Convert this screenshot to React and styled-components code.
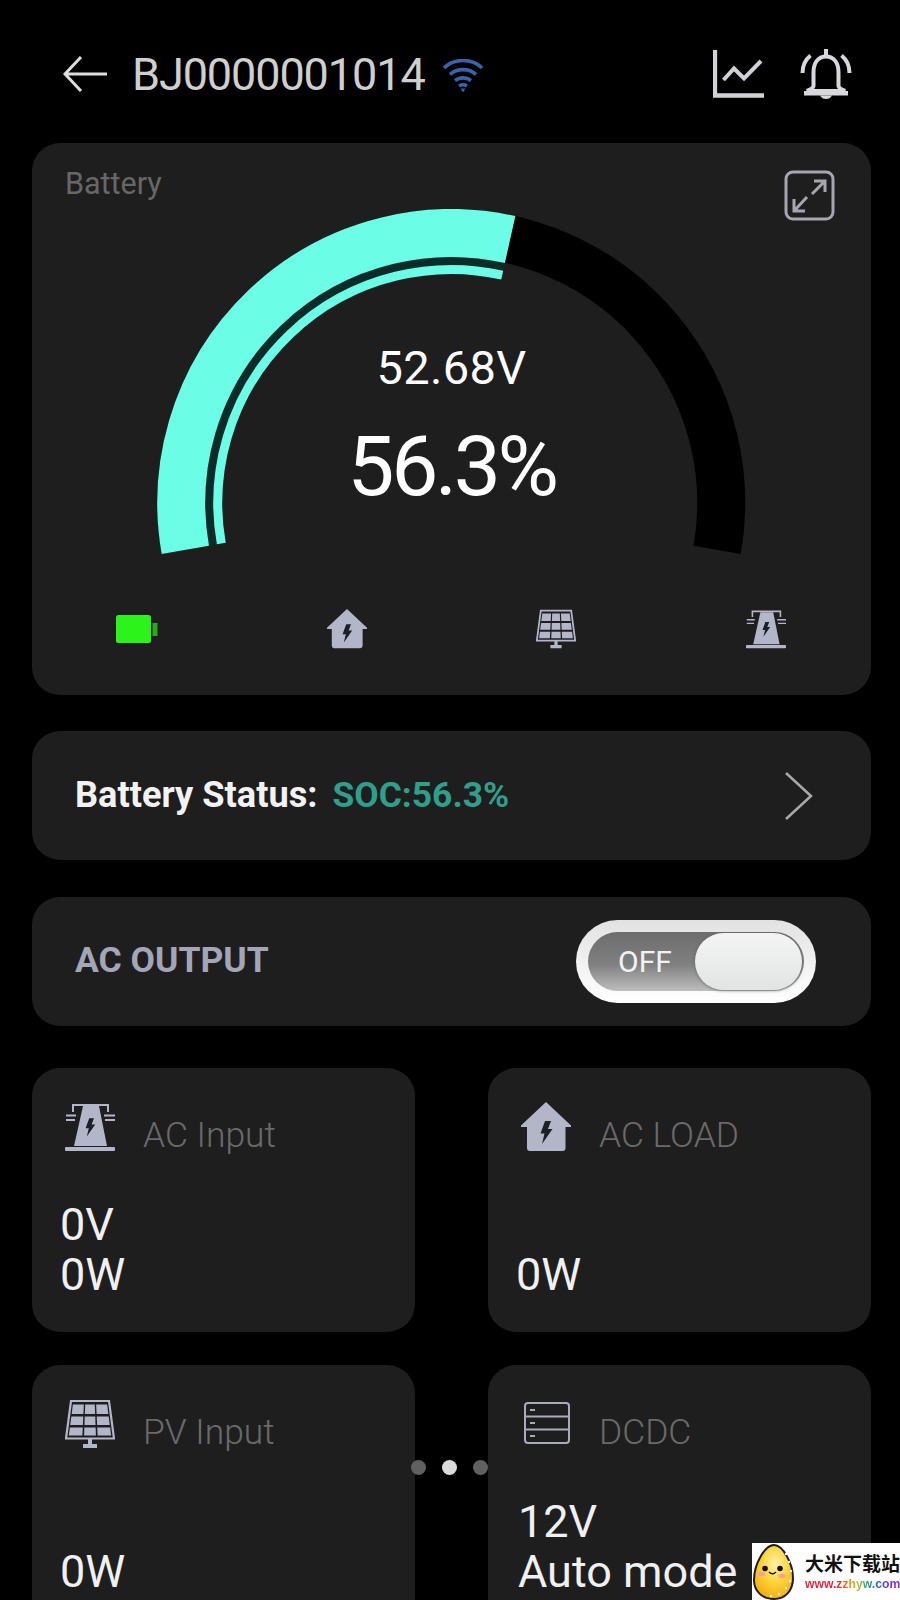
import React from "react";
import styled, { createGlobalStyle } from "styled-components";

const Global = createGlobalStyle`
  html, body { margin: 0; padding: 0; background: #000; }
  body { width: 900px; height: 1600px; overflow: hidden; font-family: Roboto, "Noto Sans", sans-serif; }
`;

const Screen = styled.div`
  position: relative;
  width: 900px;
  height: 1600px;
  box-sizing: border-box;
  padding: 0 29px 0 32px;
  overflow: hidden;
  background: #000;
`;

const Header = styled.header`
  display: flex;
  align-items: center;
  height: 143px;
  box-sizing: border-box;
  padding: 5px 19px 0 31px;
`;

const Title = styled.h1`
  margin: 0 0 0 25px;
  font-size: 45px;
  line-height: 1;
  font-weight: 400;
  letter-spacing: -1.1px;
  color: #cfcfcf;
`;

const HeaderActions = styled.div`
  display: flex;
  align-items: center;
  gap: 35px;
  margin-left: auto;
`;

const Panel = styled.section`
  background: #1e1e1f;
  border-radius: 28px;
  margin-top: ${(p) => p.$top || 0}px;
`;

const BatteryPanel = styled(Panel)`
  height: 552px;
  display: flex;
  flex-direction: column;
`;

const BatteryHead = styled.div`
  display: flex;
  justify-content: space-between;
  align-items: flex-start;
  padding: 27px 36px 0 33px;
`;

const BatteryLabel = styled.span`
  font-size: 30.5px;
  line-height: 28px;
  color: #676767;
`;

const GaugeWrap = styled.div`
  position: relative;
  width: 600px;
  height: 352px;
  margin: -12px auto 0;
`;

const GaugeText = styled.div`
  position: absolute;
  left: 0;
  right: 0;
  top: 133px;
  display: flex;
  flex-direction: column;
  align-items: center;
  gap: 28px;
  color: #fff;
`;

const Voltage = styled.span`
  font-size: 47px;
  line-height: 52px;
  font-weight: 400;
  letter-spacing: 0.3px;
`;

const Percent = styled.span`
  font-size: 84px;
  line-height: 90px;
  letter-spacing: -3.4px;
`;

const SourceRow = styled.div`
  display: grid;
  grid-template-columns: repeat(4, 1fr);
  justify-items: center;
  align-items: center;
  margin-top: 48px;
`;

const RowPanel = styled(Panel)`
  display: flex;
  align-items: center;
  justify-content: space-between;
  height: ${(p) => p.$h}px;
  box-sizing: border-box;
  padding: 0 ${(p) => p.$right}px 0 43px;
`;

const StatusText = styled.div`
  font-size: 36.2px;
  font-weight: 700;
  color: #f2f2f2;
  margin-top: -2px;
`;

const Soc = styled.span`
  font-size: 35.4px;
  color: #2f9f8b;
  margin-left: 15px;
`;

const OutputLabel = styled.span`
  font-size: 35.5px;
  font-weight: 700;
  color: #a3a6b6;
  margin-top: -3px;
`;

const ToggleFrame = styled.div`
  width: 240px;
  height: 83px;
  box-sizing: border-box;
  padding: 12px;
  border-radius: 42px;
  background: linear-gradient(#e2e2e2, #ffffff);
`;

const ToggleTrack = styled.div`
  display: flex;
  align-items: center;
  justify-content: space-between;
  height: 100%;
  border-radius: 30px;
  padding-left: 30px;
  box-sizing: border-box;
  background: linear-gradient(#6d6d6d 0%, #808080 55%, #bdbdbd 100%);
`;

const ToggleLabel = styled.span`
  font-size: 30px;
  color: #f2f2f2;
`;

const ToggleKnob = styled.div`
  width: 107px;
  height: 57px;
  border-radius: 30px;
  margin-right: 2px;
  background: linear-gradient(#f4f4f4, #e2e4e4);
  box-shadow: 0 1px 3px rgba(70, 70, 70, 0.55);
`;

const CardGrid = styled.div`
  display: grid;
  grid-template-columns: 383px 383px;
  justify-content: space-between;
  row-gap: 33px;
  margin-top: 42px;
`;

const Card = styled.article`
  display: flex;
  flex-direction: column;
  height: 264px;
  box-sizing: border-box;
  padding: 34px 30px 0 ${(p) => p.$left}px;
  background: #1e1e1f;
  border-radius: 28px;
`;

const CardHead = styled.div`
  display: flex;
  align-items: flex-start;
  gap: ${(p) => p.$gap}px;
  height: 50px;
`;

const CardTitle = styled.span`
  font-size: 35.4px;
  line-height: 50px;
  margin-top: 8px;
  font-weight: 300;
  color: #6a6a6a;
`;

const CardValues = styled.div`
  display: flex;
  flex-direction: column;
  justify-content: flex-end;
  margin-top: 48px;
  height: 100px;
  margin-left: -5px;
  font-size: 45px;
  line-height: 50px;
  color: #f0f0f0;
`;

const Pager = styled.div`
  position: absolute;
  left: 411px;
  top: 1460px;
  display: flex;
  gap: 16px;
`;

const Dot = styled.span`
  width: 15px;
  height: 15px;
  border-radius: 50%;
  background: ${(p) => (p.$active ? "#dcdcdc" : "#606060")};
`;

const Watermark = styled.div`
  position: absolute;
  right: 0;
  bottom: 0;
  width: 148px;
  height: 57px;
  display: flex;
  align-items: center;
  gap: 11px;
  box-sizing: border-box;
  padding-left: 1px;
  background: #fff;
`;

const MarkText = styled.div`
  display: flex;
  flex-direction: column;
  gap: 3px;
`;

const MarkName = styled.span`
  font-family: "Noto Sans CJK SC", sans-serif;
  font-size: 19px;
  line-height: 22px;
  font-weight: 700;
  color: #111;
  white-space: nowrap;
`;

const MarkUrl = styled.span`
  font-family: "Liberation Sans", sans-serif;
  font-size: 12.2px;
  line-height: 14px;
  font-weight: 700;
  white-space: nowrap;
  background: linear-gradient(90deg, #e8213a 0%, #e8213a 34%, #f09020 47%, #b8c030 56%, #30a870 64%, #2060e0 76%, #8030d0 90%);
  -webkit-background-clip: text;
  background-clip: text;
  color: transparent;
`;

const WifiSvg = styled.svg`
  margin: 3px 0 0 17px;
`;

const BatterySvg = styled.svg`
  margin-left: 1px;
`;

const ServerSvg = styled.svg`
  margin: 3px 0 0 1px;
`;

const EggSvg = styled.svg`
  flex: none;
`;

const polar = (r, deg) => {
  const a = (deg * Math.PI) / 180;
  return [299.25 - r * Math.cos(a), 294 - r * Math.sin(a)];
};
const arc = (r, from, to) => {
  const [x1, y1] = polar(r, from);
  const [x2, y2] = polar(r, to);
  const large = to - from > 180 ? 1 : 0;
  return `M${x1.toFixed(2)} ${y1.toFixed(2)}A${r} ${r} 0 ${large} 1 ${x2.toFixed(2)} ${y2.toFixed(2)}`;
};

const Gauge = () => {
  const start = -10;
  const end = 190;
  const value = start + 200 * 0.563;
  return (
    <svg width="600" height="352" viewBox="0 0 600 352" fill="none">
      <path d={arc(270, start, end)} stroke="#000" strokeWidth="48" />
      <path d={arc(242, start, value)} stroke="#0c2c2a" strokeWidth="8" />
      <path d={arc(270, start, value)} stroke="#6cfde6" strokeWidth="48" />
      <path d={arc(233.5, start, value)} stroke="#6cfde6" strokeWidth="9" />
    </svg>
  );
};

const Arrow = () => (
  <svg width="44" height="36" viewBox="0 0 44 36" fill="none" stroke="#dedede" strokeWidth="3">
    <path d="M44 18H2M18 1 2 18l16 17" />
  </svg>
);

const Wifi = () => (
  <WifiSvg width="42" height="34" viewBox="0 0 42 34" fill="none" stroke="#3c62ac" strokeWidth="3.6">
    <path d="M2 9C12-1 30-1 40 9" />
    <path d="M8 15.500C15 9 27 9 34 15.500" />
    <path d="M13 21.500c4.500-3.500 11.500-3.500 16 0" />
    <path d="M17 27c2.500-1.500 5.500-1.500 8 0" />
    <path d="M18.500 29.500h5L21 33.500z" fill="#3c62ac" stroke="none" />
  </WifiSvg>
);

const Chart = () => (
  <svg width="52" height="48" viewBox="0 0 52 48" fill="none" stroke="#d2d2d6">
    <path d="M2 0V45.500H51" strokeWidth="4.300" />
    <path d="M10.500 30 21 18.500l10 10L48 11" strokeWidth="4" />
  </svg>
);

const Bell = () => (
  <svg width="52" height="50" viewBox="0 0 52 50" fill="#d8d8dc" stroke="none">
    <path d="M26 7.500C18 7.500 13.500 14 13.500 23V37C13.500 39 11 40 7 42H45C41 40 38.500 39 38.500 37V23C38.500 14 34 7.500 26 7.500Z" fill="none" stroke="#d8d8dc" strokeWidth="4" />
    <path d="M4 42H48V46.500H4Z" />
    <path d="M24 0H28V7H24Z" />
    <path d="M20 46.500H32Q30 50 26 50T20 46.500Z" />
    <path d="M2.500 24C2.500 16 5.500 10.500 10.500 6.500" fill="none" stroke="#d8d8dc" strokeWidth="4" />
    <path d="M49.500 24C49.500 16 46.500 10.500 41.500 6.500" fill="none" stroke="#d8d8dc" strokeWidth="4" />
  </svg>
);

const Expand = () => (
  <svg width="51" height="51" viewBox="0 0 51 51" fill="none" stroke="#a5a6b2" strokeWidth="3">
    <rect x="2" y="2" width="47" height="47" rx="7" />
    <path d="M30 11H41V22M41 11 28 24M10 29V41H21M10 41 23 27" />
  </svg>
);

const Chevron = () => (
  <svg width="29" height="48" viewBox="0 0 29 48" fill="none" stroke="#a9a9a9" strokeWidth="2.500">
    <path d="M2 1 27 24 2 47" />
  </svg>
);

const BatteryIcon = () => (
  <BatterySvg width="43" height="28" viewBox="0 0 43 28">
    <rect x="0" y="0" width="35" height="28" rx="2.500" fill="#2cf41a" />
    <rect x="36.500" y="8" width="5" height="13" fill="#2aa822" />
  </BatterySvg>
);

const Bolt = ({ x, y, s = 1 }) => (
  <path
    transform={`translate(${x} ${y}) scale(${s})`}
    d="M-1-11H5L2-3H6.500L-4 12-1.500 1.500H-5.500z"
    fill="#1c1f28"
  />
);

const HomeIcon = ({ size = 50 }) => (
  <svg width={size} height={size} viewBox="0 0 50 50">
    <path d="M25 0 50 23.500V25H44.500V46Q44.500 49 41.500 49H9Q6 49 6 46V25H0V23.500Z" fill="#b3b6c8" />
    <Bolt x={25} y={30} />
  </svg>
);

const cellColumns = [
  [0, 0.32],
  [0.36, 0.64],
  [0.68, 1],
];
const cellRows = [
  [5.500, 15],
  [17.500, 26],
  [28.500, 36.500],
];
const SolarIcon = ({ size = 50 }) => {
  const edge = (y, t) => {
    const k = (y - 1) / 38;
    const left = 8.500 - 5 * k;
    const right = 41.500 + 5 * k;
    return left + (right - left) * t;
  };
  return (
    <svg width={size} height={size} viewBox="0 0 50 50">
      <path d="M6 2H44L49 39.500H1Z" fill="none" stroke="#b3b6c8" strokeWidth="2.200" />
      {cellRows.map(([y1, y2]) =>
        cellColumns.map(([a, b]) => (
          <path
            key={`${y1}-${a}`}
            d={`M${edge(y1, a)} ${y1}L${edge(y1, b)} ${y1}L${edge(y2, b)} ${y2}L${edge(y2, a)} ${y2}Z`}
            fill="#b3b6c8"
          />
        ))
      )}
      <path d="M23 40h4v5h5v4H18v-4h5z" fill="#b3b6c8" />
    </svg>
  );
};

const TowerIcon = ({ size = 50 }) => (
  <svg width={size} height={size} viewBox="0 0 50 50">
    <path d="M8 10V3H43V10" fill="none" stroke="#b3b6c8" strokeWidth="2" />
    <path d="M1 13.500H11M1 18H10M39 13.500H50M40 18H50" stroke="#b3b6c8" strokeWidth="1.800" />
    <path d="M18 4H34L42 44H9Z" fill="#b3b6c8" />
    <rect x="0" y="45" width="50" height="4" rx="1" fill="#b3b6c8" />
    <Bolt x={25} y={25} s={0.8} />
  </svg>
);

const ServerIcon = () => (
  <ServerSvg width="46" height="42" viewBox="0 0 46 42" fill="none" stroke="#a9abba" strokeWidth="2">
    <rect x="1" y="1" width="44" height="40" rx="3" />
    <path d="M1 14.500H45M1 27.500H45" />
    <path d="M6 8H11M6 21H11M6 34H11" strokeWidth="1.800" />
  </ServerSvg>
);

const eggDots = [
  [33, 10],
  [36, 18],
  [38, 27],
  [37, 37],
  [33, 44],
  [26, 50],
  [18, 52],
];
const Egg = () => (
  <EggSvg width="41" height="56" viewBox="0 0 41 56">
    <defs>
      <radialGradient id="eggFill" cx="0.55" cy="0.35" r="0.7">
        <stop offset="0" stopColor="#fff3a8" />
        <stop offset="0.5" stopColor="#fdd23a" />
        <stop offset="1" stopColor="#f4a90c" />
      </radialGradient>
    </defs>
    <path d="M21 1C30 1 40 20 40 34 40 47 32 55 21 55 9 55 1 47 1 36 1 20 12 1 21 1Z" fill="url(#eggFill)" stroke="#1c1c1c" strokeWidth="2" />
    {eggDots.map(([x, y]) => (
      <circle key={`${x}-${y}`} cx={x} cy={y} r="1.200" fill="#fff" />
    ))}
    <circle cx="12" cy="24.500" r="2.800" fill="#111" />
    <circle cx="27" cy="24.500" r="2.800" fill="#111" />
    <path d="M16 28q3.500 3.500 7 0" fill="none" stroke="#111" strokeWidth="1.400" />
    <ellipse cx="8.500" cy="30" rx="3.500" ry="2.200" fill="#f7a09a" />
    <ellipse cx="29" cy="32" rx="3.500" ry="2.200" fill="#f7a09a" />
  </EggSvg>
);

const cards = [
  { left: 33, gap: 28, icon: <TowerIcon />, title: "AC Input", values: ["0V", "0W"] },
  { left: 33, gap: 28, icon: <HomeIcon />, title: "AC LOAD", values: ["0W"] },
  { left: 33, gap: 28, icon: <SolarIcon />, title: "PV Input", values: ["0W"] },
  { left: 35, gap: 29, icon: <ServerIcon />, title: "DCDC", values: ["12V", "Auto mode"] },
];

export default function App() {
  return (
    <Screen>
      <Global />
      <Header>
        <Arrow />
        <Title>BJ0000001014</Title>
        <Wifi />
        <HeaderActions>
          <Chart />
          <Bell />
        </HeaderActions>
      </Header>

      <BatteryPanel>
        <BatteryHead>
          <BatteryLabel>Battery</BatteryLabel>
          <Expand />
        </BatteryHead>
        <GaugeWrap>
          <Gauge />
          <GaugeText>
            <Voltage>52.68V</Voltage>
            <Percent>56.3%</Percent>
          </GaugeText>
        </GaugeWrap>
        <SourceRow>
          <BatteryIcon />
          <HomeIcon size={40} />
          <SolarIcon size={40} />
          <TowerIcon size={40} />
        </SourceRow>
      </BatteryPanel>

      <RowPanel $top={36} $h={129} $right={58}>
        <StatusText>
          Battery Status:<Soc>SOC:56.3%</Soc>
        </StatusText>
        <Chevron />
      </RowPanel>

      <RowPanel $top={37} $h={129} $right={55}>
        <OutputLabel>AC OUTPUT</OutputLabel>
        <ToggleFrame>
          <ToggleTrack>
            <ToggleLabel>OFF</ToggleLabel>
            <ToggleKnob />
          </ToggleTrack>
        </ToggleFrame>
      </RowPanel>

      <CardGrid>
        {cards.map((c) => (
          <Card key={c.title} $left={c.left}>
            <CardHead $gap={c.gap}>
              {c.icon}
              <CardTitle>{c.title}</CardTitle>
            </CardHead>
            <CardValues>
              {c.values.map((v) => (
                <span key={v}>{v}</span>
              ))}
            </CardValues>
          </Card>
        ))}
      </CardGrid>

      <Pager>
        <Dot />
        <Dot $active />
        <Dot />
      </Pager>

      <Watermark>
        <Egg />
        <MarkText>
          <MarkName>大米下载站</MarkName>
          <MarkUrl>www.zzhyw.com</MarkUrl>
        </MarkText>
      </Watermark>
    </Screen>
  );
}
